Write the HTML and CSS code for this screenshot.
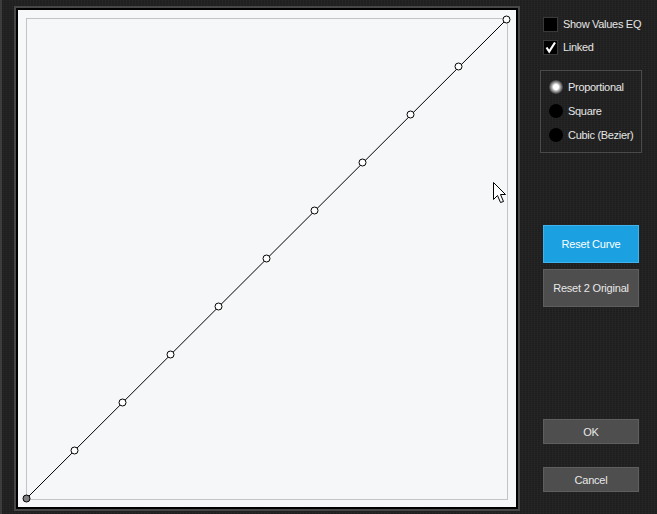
FILE: index.html
```html
<!DOCTYPE html>
<html>
<head>
<meta charset="utf-8">
<link rel="stylesheet" href="styles.css">
</head>
<body>
<div class="app">
  <div class="edge"></div>
  <div class="frame">
    <div class="frame-inner">
      <svg class="curve" width="498" height="497" viewBox="0 0 498 497">
        <rect x="8.5" y="8.5" width="481" height="481" fill="none" stroke="#c4c4c4" stroke-width="1"/>
        <line x1="8.5" y1="488.5" x2="488.5" y2="9.5" stroke="#000" stroke-width="1"/>
        <g fill="#fff" stroke="#000" stroke-width="1">
          <circle cx="8.5" cy="488.5" r="3.5" fill="#808080"/>
          <circle cx="56.5" cy="440.5" r="3.5"/>
          <circle cx="104.5" cy="392.5" r="3.5"/>
          <circle cx="152.5" cy="344.5" r="3.5"/>
          <circle cx="200.5" cy="296.5" r="3.5"/>
          <circle cx="248.5" cy="248.5" r="3.5"/>
          <circle cx="296.5" cy="200.5" r="3.5"/>
          <circle cx="344.5" cy="152.5" r="3.5"/>
          <circle cx="392.5" cy="104.5" r="3.5"/>
          <circle cx="440.5" cy="56.5" r="3.5"/>
          <circle cx="488.5" cy="9.5" r="3.5"/>
        </g>
        <path d="M475.5 172.5 L475.5 189.5 L479.5 185.5 L482.5 192.5 L485.5 191.5 L482.5 184.5 L487.5 184.5 Z" fill="#fff" stroke="#000" stroke-width="1" stroke-linejoin="round"/>
      </svg>
    </div>
  </div>
  <div class="side">
    <label class="check"><span class="box"></span><span class="lbl">Show Values EQ</span></label>
    <label class="check"><span class="box checked">
      <svg width="13" height="13" viewBox="0 0 13 13"><path d="M2.5 6.5 L5.2 10.5 L11 1.5" fill="none" stroke="#fff" stroke-width="2.2"/></svg>
    </span><span class="lbl">Linked</span></label>
    <div class="group">
      <div class="radio"><span class="dot on"></span><span class="lbl">Proportional</span></div>
      <div class="radio"><span class="dot"></span><span class="lbl">Square</span></div>
      <div class="radio"><span class="dot"></span><span class="lbl">Cubic (Bezier)</span></div>
    </div>
    <button class="btn primary tall">Reset Curve</button>
    <button class="btn tall second">Reset 2 Original</button>
    <button class="btn short ok">OK</button>
    <button class="btn short cancel">Cancel</button>
  </div>
</div>
</body>
</html>
```

FILE: styles.css
```css
html, body {
  margin: 0;
  padding: 0;
}
body {
  width: 657px;
  height: 514px;
  overflow: hidden;
  background-color: #222222;
  background-image:
    repeating-linear-gradient(90deg, rgba(255,255,255,0.025) 0 1px, transparent 1px 3px),
    repeating-linear-gradient(0deg, rgba(0,0,0,0.12) 0 1px, transparent 1px 2px);
  font-family: "Liberation Sans", Arial, sans-serif;
  font-size: 11px;
  color: #e6e6e6;
}
.app {
  display: flex;
  height: 514px;
}
.edge {
  width: 2px;
  background: #3c3c3c;
  flex: none;
}
.frame {
  margin: 6px 0 0 12px;
  width: 502px;
  height: 501px;
  border: 2px solid #474747;
  flex: none;
}
.frame-inner {
  width: 498px;
  height: 497px;
  border: 2px solid #000;
  background: #f6f7f9;
}
.curve {
  display: block;
}
.side {
  display: flex;
  flex-direction: column;
  margin-left: 20px;
  width: 102px;
  padding-top: 17px;
}
.check {
  display: flex;
  align-items: center;
  gap: 5px;
  padding-left: 3px;
  height: 15px;
  margin-bottom: 8px;
  line-height: 15px;
  white-space: nowrap;
}
.lbl {
  white-space: nowrap;
  letter-spacing: -0.3px;
}
.box {
  width: 13px;
  height: 13px;
  background: #000;
  border: 1px solid #3a3a3a;
  display: flex;
  align-items: center;
  justify-content: center;
  flex: none;
}
.box svg {
  display: block;
}
.group {
  margin-top: 7px;
  height: 83px;
  border: 1px solid #4a4a4a;
  display: flex;
  flex-direction: column;
  padding: 9px 0 0 8px;
  box-sizing: border-box;
  gap: 10px;
}
.radio {
  display: flex;
  align-items: center;
  gap: 5px;
  height: 14px;
  white-space: nowrap;
}
.dot {
  width: 14px;
  height: 14px;
  border-radius: 50%;
  background: #000;
  flex: none;
  box-sizing: border-box;
}
.dot.on {
  background: radial-gradient(circle, #ffffff 0 2.5px, #cfcfcf 3.5px, #8a8a8a 5px, #3c3c3c 7px);
}
.btn {
  margin-left: 3px;
  width: 96px;
  font-family: "Liberation Sans", Arial, sans-serif;
  font-size: 11px;
  letter-spacing: -0.2px;
  color: #e8e8e8;
  background: #4e4e4e;
  border: 1px solid #5e5e5e;
  padding: 0;
  display: flex;
  align-items: center;
  justify-content: center;
  white-space: nowrap;
}
.tall { height: 38px; }
.short { height: 25px; }
.primary {
  margin-top: 72px;
  background: #1ba1e2;
  border-color: #3fb4ec;
  color: #ffffff;
}
.second { margin-top: 6px; }
.ok { margin-top: 112px; }
.cancel { margin-top: 23px; }
```
